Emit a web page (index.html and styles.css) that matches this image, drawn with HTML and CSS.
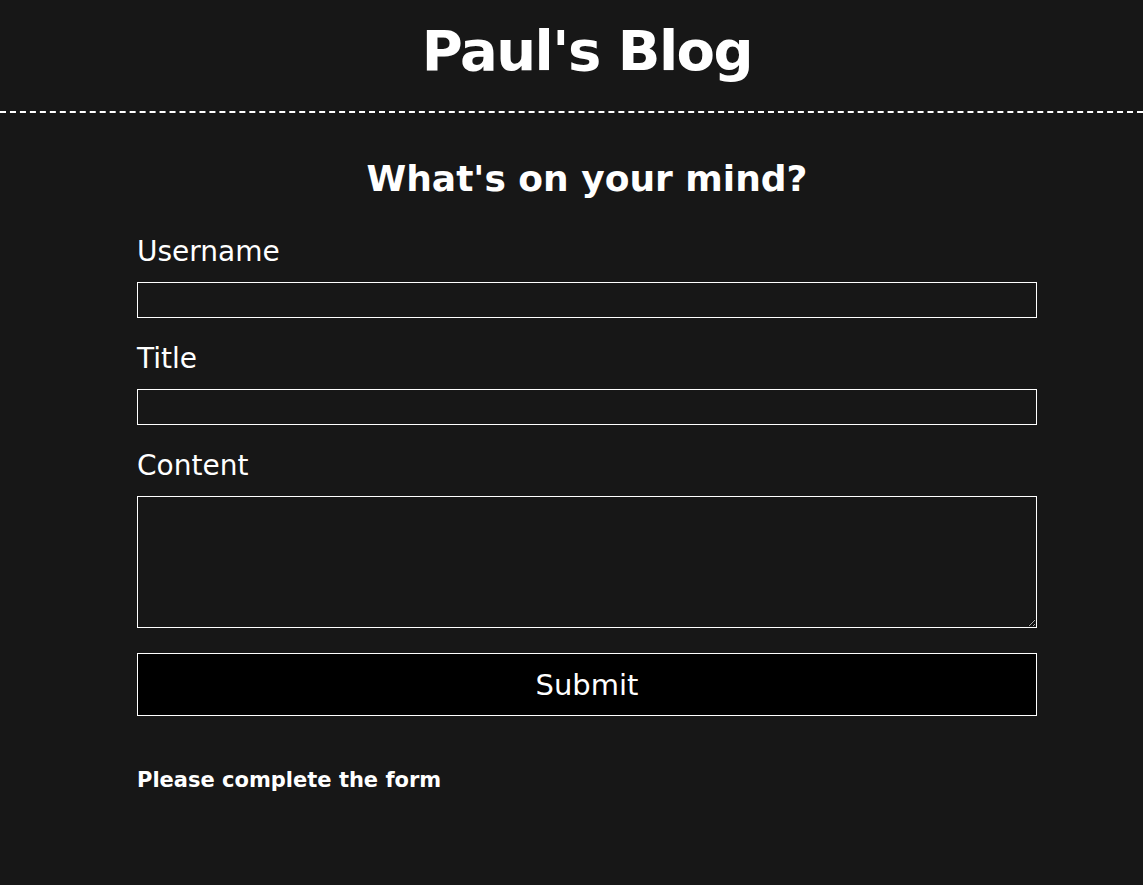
FILE: index.html
```html
<!DOCTYPE html>
<html>
<head>
<meta charset="utf-8">
<link rel="stylesheet" href="styles.css">
</head>
<body>
<header class="site-header">
  <h1 class="site-title">Paul's Blog</h1>
</header>
<main class="main">
  <h2 class="form-title">What's on your mind?</h2>
  <form class="post-form">
    <label class="field-label" for="username">Username</label>
    <input class="field-input" id="username" type="text">
    <label class="field-label" for="title">Title</label>
    <input class="field-input" id="title" type="text">
    <label class="field-label" for="content">Content</label>
    <textarea class="field-textarea" id="content"></textarea>
    <button class="submit-btn" type="button">Submit</button>
  </form>
  <p class="form-message">Please complete the form</p>
</main>
</body>
</html>
```
FILE: styles.css
```css
html, body {
  margin: 0;
  padding: 0;
  background: #171717;
  color: #ffffff;
  font-family: "DejaVu Sans", "Liberation Sans", sans-serif;
}
.site-header {
  border-bottom: 2px dashed #ffffff;
  padding: 3px 0 0 31px;
  height: 113px;
  box-sizing: border-box;
}
.site-title {
  margin: 0;
  text-align: center;
  font-size: 56px;
  letter-spacing: -1.5px;
  font-weight: bold;
  line-height: 96px;
}
.main {
  width: 900px;
  margin-left: 137px;
  display: flex;
  flex-direction: column;
}
.form-title {
  margin: 38px 0 0;
  text-align: center;
  font-size: 36px;
  line-height: 56px;
  font-weight: bold;
}
.post-form {
  display: flex;
  flex-direction: column;
  margin-top: 29px;
}
.field-label {
  font-size: 28px;
  line-height: 32px;
  margin: 0 0 14px;
}
.field-input {
  height: 36px;
  box-sizing: border-box;
  background: transparent;
  border: 1px solid #ffffff;
  color: #fff;
  margin: 0 0 25px;
  padding: 0 4px;
}
.field-textarea {
  height: 132px;
  box-sizing: border-box;
  background: transparent;
  border: 1px solid #ffffff;
  color: #fff;
  margin: 0;
  resize: vertical;
}
.submit-btn {
  margin-top: 25px;
  height: 63px;
  background: #000;
  border: 1px solid #ffffff;
  color: #fff;
  font-family: inherit;
  font-size: 29px;
  padding: 0;
}
.form-message {
  margin: 51px 0 0;
  font-size: 21px;
  line-height: 26px;
  font-weight: bold;
}
```
